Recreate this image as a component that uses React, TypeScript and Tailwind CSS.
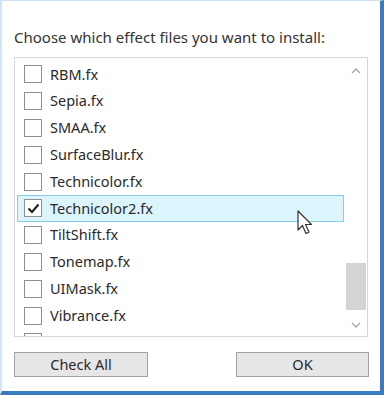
const files = [
  "RBM.fx",
  "Sepia.fx",
  "SMAA.fx",
  "SurfaceBlur.fx",
  "Technicolor.fx",
  "Technicolor2.fx",
  "TiltShift.fx",
  "Tonemap.fx",
  "UIMask.fx",
  "Vibrance.fx",
];

function Check() {
  return (
    <svg width="13" height="11" viewBox="0 0 13 11" className="block">
      <path d="M1.5 5.5 L5 9 L11.5 1.5" fill="none" stroke="#1a1a1a" strokeWidth="2" />
    </svg>
  );
}

function Row({ name, checked, hot }: { name?: string; checked?: boolean; hot?: boolean }) {
  return (
    <div
      className={
        "flex h-[26.8px] shrink-0 items-center border " +
        (hot ? "border-[#86cde6] bg-[#dcf4fc]" : "border-transparent")
      }
    >
      <div className="ml-[6px] flex h-[18px] w-[18px] items-center justify-center border border-[#8f8f8f] bg-white">
        {checked && <Check />}
      </div>
      {name && <span className="ml-[8px] text-[14.5px] text-[#2a2a2a]">{name}</span>}
    </div>
  );
}

export default function App() {
  return (
    <div
      className="relative h-[395px] w-[384px] overflow-hidden border-t border-r-4 border-b-4 border-l-2 border-t-[#cfe2f1] border-r-[#3a7cc2] border-b-[#3a7cc2] border-l-[#d3e5f3] bg-white"
      style={{ fontFamily: '"Noto Sans", "Open Sans", sans-serif' }}
    >
      <div className="flex flex-col pl-[12px] pr-[10px] pt-[26px]">
        <p className="h-[20px] text-[15px] leading-[20px] text-[#333]">
          Choose which effect files you want to install:
        </p>
        <div className="mt-[10px] flex h-[280px] w-[354px] border border-[#d6d6d6]">
          <div className="flex w-[329px] flex-col overflow-hidden pl-[2px] pt-[3px]">
            {files.map((f) => (
              <Row key={f} name={f} checked={f === "Technicolor2.fx"} hot={f === "Technicolor2.fx"} />
            ))}
            {/* next row, cut off by the list's lower edge */}
            <Row />
          </div>
          <div className="flex w-[23px] flex-col items-center pt-[10px] pb-[8px]">
            <svg width="10" height="6" viewBox="0 0 10 6">
              <path d="M1 5 L5 1 L9 5" fill="none" stroke="#a6a6a6" strokeWidth="1.3" />
            </svg>
            <div className="flex-1" />
            <div className="mb-[12px] h-[47px] w-[20px] bg-[#d4d4d4]" />
            <svg width="10" height="6" viewBox="0 0 10 6">
              <path d="M1 1 L5 5 L9 1" fill="none" stroke="#a6a6a6" strokeWidth="1.3" />
            </svg>
          </div>
        </div>
        <div className="mt-[15px] flex w-[355px] justify-between">
          <button className="h-[25px] w-[134px] border border-[#a3a3a3] bg-[#e6e6e6] text-[14.5px] text-[#2a2a2a]">
            Check All
          </button>
          <button className="h-[25px] w-[133px] border border-[#a3a3a3] bg-[#e6e6e6] text-[14.5px] text-[#2a2a2a]">
            OK
          </button>
        </div>
      </div>
      <svg
        className="absolute left-[295px] top-[209px]"
        width="16"
        height="26"
        viewBox="0 0 16 26"
      >
        <path
          d="M1 1 L1 20 L5.5 15.5 L9 23.5 L12 22 L8.5 14.5 L14.5 14.5 Z"
          fill="#fff"
          stroke="#333"
          strokeWidth="1.2"
          strokeLinejoin="round"
        />
      </svg>
    </div>
  );
}
